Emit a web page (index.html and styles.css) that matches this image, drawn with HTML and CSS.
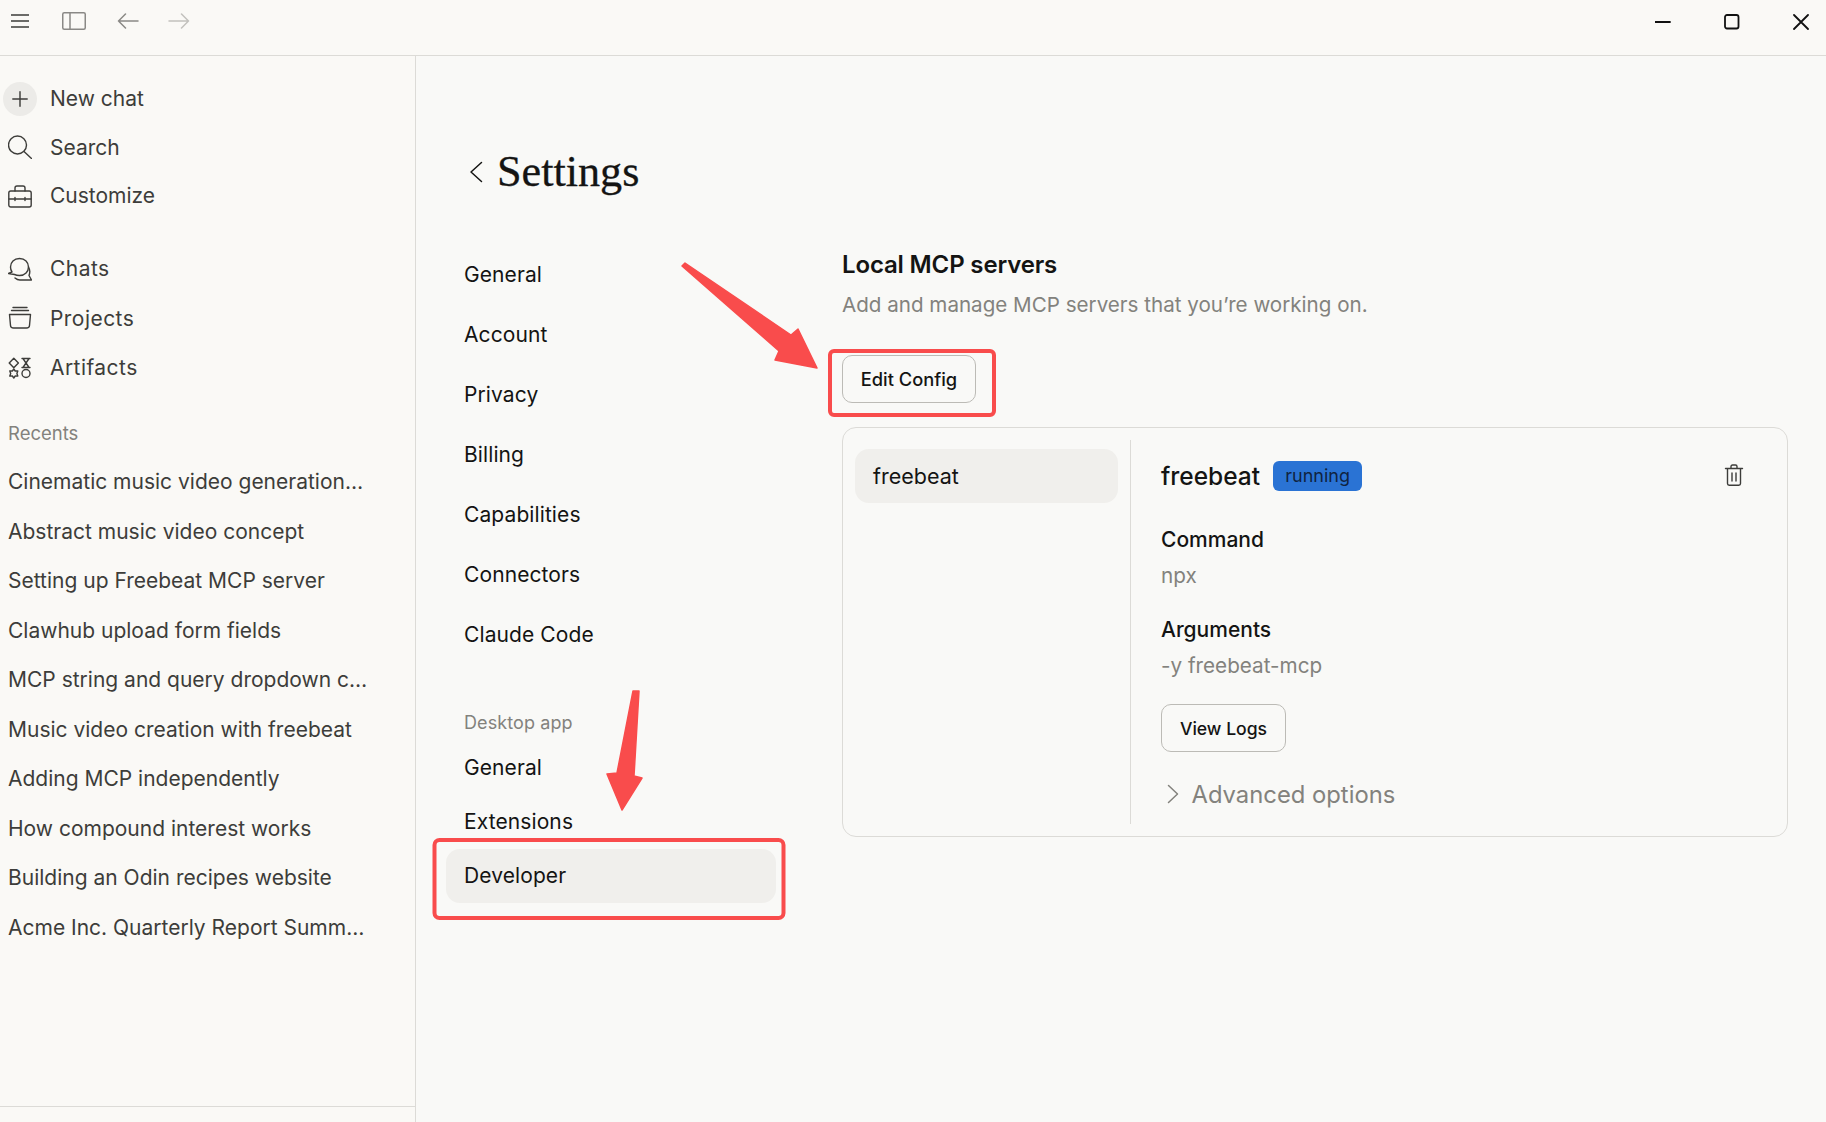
FILE: index.html
```html
<!DOCTYPE html>
<html lang="en">
<head>
<meta charset="utf-8">
<title>Settings</title>
<link rel="stylesheet" href="styles.css">
</head>
<body>
<div class="app">
  <header class="titlebar">
    <div class="tb-left">
      <svg class="tb-ico tb-menu" viewBox="0 0 18 14"><path d="M0 1h18M0 7h18M0 13h18"/></svg>
      <svg class="tb-ico tb-side" viewBox="0 0 24 18"><rect x="0.75" y="0.75" width="22.5" height="16.5" rx="1.5"/><path d="M8 1v16"/></svg>
      <svg class="tb-ico tb-back" viewBox="0 0 22 16"><path d="M21 8H1.5M8.5 1 1.5 8l7 7"/></svg>
      <svg class="tb-ico tb-fwd" viewBox="0 0 22 16"><path d="M1 8h19.5M13.5 1l7 7-7 7"/></svg>
    </div>
    <div class="tb-right">
      <svg class="win" viewBox="0 0 16 16"><path d="M0 8h15"/></svg>
      <svg class="win" viewBox="0 0 16 16"><rect x="1" y="1" width="13.5" height="13.5" rx="2"/></svg>
      <svg class="win" viewBox="0 0 16 16"><path d="M1 1l14 14M15 1 1 15"/></svg>
    </div>
  </header>
  <div class="body">
    <aside class="sidebar">
      <nav class="side-nav">
        <a class="side-item side-new"><span class="side-ico side-ico-new"><svg viewBox="0 0 20 20"><path d="M10 2v16M2 10h16"/></svg></span>New chat</a>
        <a class="side-item side-new"><span class="side-ico"><svg viewBox="0 0 24 24"><circle cx="9.500" cy="10" r="9"/><path d="M16 16.500l7.500 7"/></svg></span>Search</a>
        <a class="side-item side-new"><span class="side-ico"><svg viewBox="0 0 24 24"><path d="M7 7V4c0-1.200.8-2 2-2h6c1.200 0 2 .8 2 2v3"/><rect x="0.800" y="7" width="22.400" height="16" rx="2"/><path d="M1 15h22M7 13.500v3M17 13.500v3"/></svg></span>Customize</a>
      </nav>
      <nav class="side-nav side-nav-second">
        <a class="side-item"><span class="side-ico"><svg viewBox="0 0 24 24"><path d="M11.500 1.500c-5.500 0-9 4-9 8.500 0 2 .5 3.500 1.500 5l-3.500 1.500 6 1c1.500.7 3 1 5 1 5.500 0 9-4 9-8.500s-3.500-8.500-9-8.500z"/><path d="M20.500 10c1.500 2.500 1.500 6 .5 8.500l2.500 4.500H12c-2 0-3.500-.7-5-2"/></svg></span>Chats</a>
        <a class="side-item"><span class="side-ico"><svg viewBox="0 0 24 24"><path d="M5 1.500h14M3.500 4.500h17M1.500 8.500h21l-1 11c-.1 1.500-1 2.500-3 2.500h-13c-2 0-2.900-1-3-2.500l-1-11z"/></svg></span>Projects</a>
        <a class="side-item"><span class="side-ico"><svg viewBox="0 0 24 24"><path d="M5.800 2.200l4.600 4.800-4.600 4.800L1.200 7l4.600-4.800z"/><path d="M14 2.500h8M14 11.500h8M15.300 3l2.700 4-2.700 4M20.700 3 18 7l2.700 4"/><path d="M5.800 13l1.400 2 2.600-.1-.9 2.600.9 2.600-2.600-.1-1.400 2-1.400-2-2.600.1.900-2.600-.9-2.600 2.600.1z"/><circle cx="18" cy="17.500" r="4"/></svg></span>Artifacts</a>
      </nav>
      <div class="recents-label">Recents</div>
      <ul class="recents">
        <li>Cinematic music video generation…</li>
        <li>Abstract music video concept</li>
        <li>Setting up Freebeat MCP server</li>
        <li>Clawhub upload form fields</li>
        <li>MCP string and query dropdown c…</li>
        <li>Music video creation with freebeat</li>
        <li>Adding MCP independently</li>
        <li>How compound interest works</li>
        <li>Building an Odin recipes website</li>
        <li>Acme Inc. Quarterly Report Summ…</li>
      </ul>
      <div class="side-foot"></div>
    </aside>
    <main class="main">
      <div class="settings-head">
        <svg class="head-back" viewBox="0 0 14 22"><path d="M12.500 1.500 2 11l10.500 9.500"/></svg>
        <h1>Settings</h1>
      </div>
      <div class="settings-body">
        <nav class="set-nav">
          <div class="set-group">
            <a class="set-item">General</a>
            <a class="set-item">Account</a>
            <a class="set-item">Privacy</a>
            <a class="set-item">Billing</a>
            <a class="set-item">Capabilities</a>
            <a class="set-item">Connectors</a>
            <a class="set-item">Claude Code</a>
          </div>
          <div class="set-label">Desktop app</div>
          <a class="set-item">General</a>
          <a class="set-item">Extensions</a>
          <a class="set-item set-active">Developer</a>
        </nav>
        <section class="content">
          <h2>Local MCP servers</h2>
          <p class="sub">Add and manage MCP servers that you’re working on.</p>
          <button class="btn btn-edit">Edit Config</button>
          <div class="card">
            <div class="server-list">
              <div class="server-item">freebeat</div>
            </div>
            <div class="server-detail">
              <div class="detail-head">
                <span class="detail-name">freebeat</span>
                <span class="badge">running</span>
                <svg class="trash" viewBox="0 0 20 22"><path d="M1.500 4.500h17M7 4.500V2.500C7 1.700 7.600 1 8.500 1h3c.9 0 1.500.7 1.500 1.500v2M3.500 4.500v15c0 1 .7 1.700 1.700 1.700h9.600c1 0 1.700-.7 1.700-1.700v-15M8 9v8M12 9v8"/></svg>
              </div>
              <div class="field-label field-first">Command</div>
              <div class="field-value">npx</div>
              <div class="field-label field-second">Arguments</div>
              <div class="field-value">-y freebeat-mcp</div>
              <button class="btn btn-logs">View Logs</button>
              <div class="advanced">
                <svg viewBox="0 0 12 20"><path d="M1.500 1.500 10.500 10l-9 8.500"/></svg>
                <span>Advanced options</span>
              </div>
            </div>
          </div>
        </section>
      </div>
    </main>
  </div>
  <svg class="annotations" viewBox="0 0 1826 1122">
    <rect class="mark-box" x="830" y="351" width="164" height="64" rx="4"/>
    <rect class="mark-box" x="434.500" y="840" width="349" height="78" rx="5"/>
    <polygon class="mark-arrow" points="682,266 685,263 791,335 798,329 817,368 775,360 779,351"/>
    <polygon class="mark-arrow" points="633,691 639,691 634,776 642,778 622,810 607,774 617,773"/>
  </svg>
</div>
</body>
</html>
```

FILE: styles.css
```css
* { box-sizing: border-box; }
html, body { margin: 0; padding: 0; }
body {
  background: #f9f9f7;
  color: #141413;
  font-family: "Inter", "Liberation Sans", sans-serif;
  overflow: hidden;
}
.app { position: relative; width: 1826px; height: 1122px; display: flex; flex-direction: column; }
svg { display: block; fill: none; stroke-linecap: round; stroke-linejoin: round; }

.titlebar {
  height: 56px; flex: none;
  background: #faf9f6;
  border-bottom: 1px solid #dcdbd7;
  display: flex; justify-content: space-between; align-items: flex-start;
}
.tb-left { display: flex; align-items: center; height: 42px; padding-left: 11px; }
.tb-ico { stroke: #3d3d3a; }
.tb-menu { width: 18px; height: 14px; stroke-width: 1.6; stroke-linecap: butt; }
.tb-side { width: 24px; height: 18px; margin-left: 33px; stroke: #8a8986; stroke-width: 1.5; }
.tb-back { width: 22px; height: 16px; margin-left: 31px; stroke: #8a8986; stroke-width: 1.5; }
.tb-fwd { width: 22px; height: 16px; margin-left: 29px; stroke: #c2c1bd; stroke-width: 1.5; }
.tb-right { display: flex; align-items: center; height: 44px; padding-right: 17px; gap: 53px; }
.win { width: 16px; height: 16px; stroke: #111; stroke-width: 1.8; }

.body { flex: 1; display: flex; min-height: 0; }
.sidebar {
  width: 416px; flex: none;
  border-right: 1px solid #dcdbd7;
  background: #faf9f6;
  display: flex; flex-direction: column;
  color: #3d3d3a;
  font-size: 21px;
}
.side-nav { display: flex; flex-direction: column; padding-top: 18.500px; }
.side-nav-second { padding-top: 24px; letter-spacing: 0.450px; }
.side-item { display: flex; align-items: center; height: 49.500px; padding-left: 3px; }
.side-new { height: 48.500px; }
.side-ico { width: 34px; height: 34px; margin-right: 13px; display: flex; align-items: center; justify-content: center; flex: none; }
.side-ico svg { width: 24px; height: 24px; stroke: #3d3d3a; stroke-width: 1.400; }
.side-ico-new { background: #ecebe8; border-radius: 50%; }
.side-ico-new svg { width: 18px; height: 18px; stroke-width: 1.600; }
.recents-label { margin: 22px 0 0 8px; height: 36px; line-height: 36px; font-size: 18.500px; color: #83827d; }
.recents { list-style: none; margin: 6.500px 0 0; padding: 0 0 0 8px; }
.recents li { height: 49.500px; line-height: 49.500px; white-space: nowrap; }
.side-foot { margin-top: auto; margin-bottom: 15px; border-top: 1px solid #dcdbd7; }

.main { flex: 1; min-width: 0; padding: 86px 38px 0 30px; }
.settings-head { display: flex; align-items: center; height: 60px; padding-left: 23px; margin-bottom: 45px; }
.head-back { width: 14px; height: 22px; stroke: #141413; stroke-width: 1.500; }
.settings-head h1 {
  margin: 0 0 0 14px;
  font-family: "Liberation Serif", serif;
  font-weight: 400; font-size: 44.200px; line-height: 60px;
  -webkit-text-stroke: 0.300px #141413;
}
.settings-body { display: flex; gap: 66px; }
.set-nav { width: 330px; flex: none; font-size: 21px; letter-spacing: 0.100px; }
.set-group { display: flex; flex-direction: column; gap: 6px; }
.set-item { display: flex; align-items: center; height: 54px; padding-left: 18px; border-radius: 14px; }
.set-active { background: #f0efec; margin-top: 1px; padding-bottom: 2px; }
.set-label { margin: 44px 0 0 18px; height: 35px; line-height: 36px; font-size: 18px; color: #83827d; }
.content { flex: 1; min-width: 0; }
.content h2 { margin: 1px 0 0; font-size: 24px; font-weight: 600; line-height: 34px; letter-spacing: -0.150px; }
.sub { margin: 6px 0 0; font-size: 20.600px; line-height: 34px; color: #83827d; }
.btn {
  display: block; font: inherit; background: transparent; color: #141413;
  border: 1px solid #bcbbb6; border-radius: 10px; padding: 0; font-weight: 500;
}
.btn-edit { width: 134px; height: 48px; margin-top: 33px; font-size: 18.300px; }
.btn-logs { width: 125px; height: 48px; margin-top: 20px; font-size: 17.600px; }
.card {
  margin-top: 24px; height: 410px;
  border: 1px solid #dcdbd7; border-radius: 14px;
  padding: 12px 43px 12px 12px;
  display: flex;
}
.server-list { width: 276px; flex: none; border-right: 1px solid #dcdbd7; padding: 9px 12px 0 0; }
.server-item { height: 54px; line-height: 54px; padding-left: 18px; background: #f0efec; border-radius: 14px; font-size: 21.500px; }
.server-detail { flex: 1; padding: 16px 0 0 30px; font-size: 21px; }
.detail-head { display: flex; align-items: center; height: 40px; }
.detail-name { font-size: 24.500px; font-weight: 500; }
.badge {
  margin-left: 13px; width: 89px; height: 30px; line-height: 29px; text-align: center;
  background: #2a73d4; border-radius: 6px; color: #10233f; font-size: 18px;
}
.trash { width: 20px; height: 22px; margin-left: auto; margin-top: -2px; stroke: #3d3d3a; stroke-width: 1.400; }
.field-label { line-height: 36px; font-weight: 500; }
.field-first { margin-top: 26px; }
.field-second { margin-top: 18px; }
.field-value { line-height: 36px; color: #83827d; font-size: 20.700px; }
.advanced { display: flex; align-items: center; height: 36px; margin-top: 24px; color: #83827d; font-size: 23.800px; }
.advanced svg { width: 12px; height: 20px; margin-left: 6px; stroke: #83827d; stroke-width: 1.500; }
.advanced span { margin-left: 12.500px; }

.annotations { position: absolute; left: 0; top: 0; width: 1826px; height: 1122px; pointer-events: none; }
.mark-box { fill: none; stroke: #f94c4c; stroke-width: 4; }
.mark-arrow { fill: #f94c4c; stroke: #f94c4c; stroke-width: 1.500; }
```
